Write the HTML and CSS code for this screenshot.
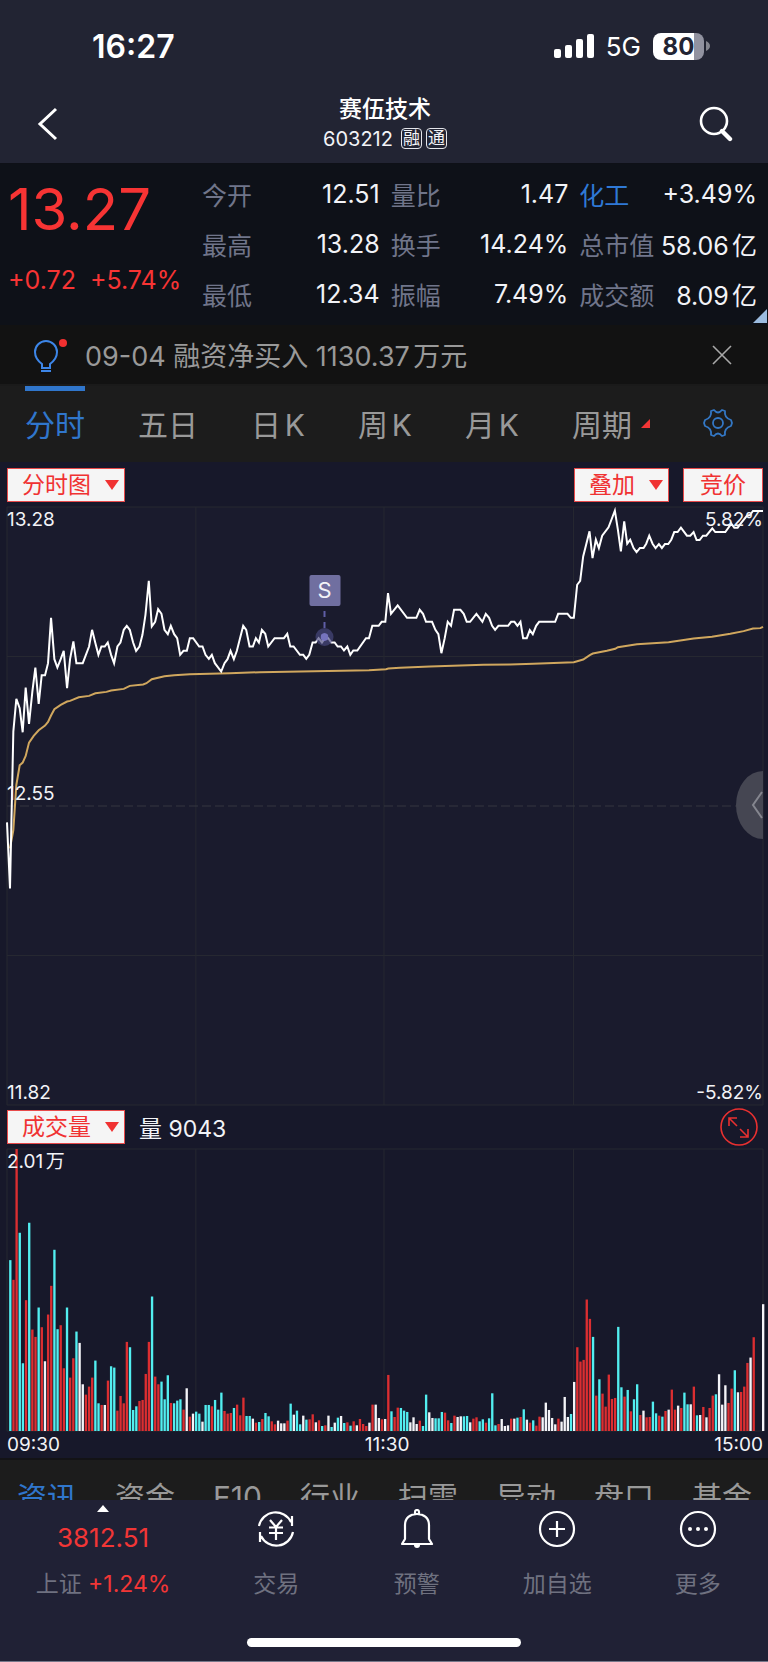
FILE: index.html
```html
<!DOCTYPE html>
<html lang="zh-CN">
<head>
  <meta charset="UTF-8" />
  <meta name="viewport" content="width=device-width, initial-scale=1.0"/>
  <title>赛伍技术 603212</title>
  <link rel="stylesheet" href="styles.css">
</head>
<body>
  <div class="statusbar">
    <span class="clock">16:27</span>
    <div class="signals">
      <svg width="40" height="26" viewBox="0 0 40 26" fill="#fff" aria-hidden="true">
        <rect x="0" y="16" width="7" height="9" rx="2"/>
        <rect x="11" y="12" width="7" height="13" rx="2"/>
        <rect x="22" y="6" width="7" height="19" rx="2"/>
        <rect x="33" y="1" width="7" height="24" rx="2"/>
      </svg>
      <span class="network">5G</span>
      <div class="battery-wrap">
        <span class="battery">80</span>
        <svg width="4" height="10" viewBox="0 0 4 10" aria-hidden="true"><path d="M0 0Q4 2 4 5T0 10Z" fill="#84858f"/></svg>
      </div>
    </div>
  </div>

  <header>
    <button class="icon-btn back" aria-label="返回">
      <svg width="24" height="34" viewBox="0 0 24 34" fill="none" stroke="#fff" stroke-width="3"><path d="M20 2L4 17L20 32"/></svg>
    </button>
    <div class="stock">
      <h1>赛伍技术</h1>
      <div class="code"><span>603212</span><span class="tag">融</span><span class="tag">通</span></div>
    </div>
    <button class="icon-btn search" aria-label="搜索">
      <svg width="36" height="36" viewBox="0 0 36 36" fill="none" stroke="#fff"><circle cx="16" cy="15" r="13" stroke-width="2.6"/><path d="M24 25L32 33" stroke-width="4.4" stroke-linecap="round"/></svg>
    </button>
  </header>

  <section class="quote">
    <div class="price">
      <strong>13.27</strong>
      <div class="change"><span>+0.72</span><span>+5.74%</span></div>
    </div>
    <dl class="stats">
      <div><dt>今开</dt><dd>12.51</dd></div>
      <div><dt>量比</dt><dd>1.47</dd></div>
      <div><dt class="link">化工</dt><dd>+3.49%</dd></div>
      <div><dt>最高</dt><dd>13.28</dd></div>
      <div><dt>换手</dt><dd>14.24%</dd></div>
      <div><dt>总市值</dt><dd>58.06亿</dd></div>
      <div><dt>最低</dt><dd>12.34</dd></div>
      <div><dt>振幅</dt><dd>7.49%</dd></div>
      <div><dt>成交额</dt><dd>8.09亿</dd></div>
    </dl>
    <i class="corner"></i>
  </section>

  <div class="news">
    <svg width="34" height="46" viewBox="0 0 34 46" fill="none" stroke="#3d86e8" stroke-width="2" aria-hidden="true">
      <path d="M8 36V32C4 29 1 25 1 20A11 11 0 0 1 23 20C23 25 20 29 16 32V36ZM7 39H17"/>
      <circle cx="29" cy="11" r="4" fill="#f23030" stroke="none"/>
    </svg>
    <p>09-04 融资净买入 1130.37万元</p>
    <button class="icon-btn" aria-label="关闭">
      <svg width="20" height="20" viewBox="0 0 20 20" fill="none" stroke="#a8a8a8" stroke-width="1.6"><path d="M1 1L19 19M19 1L1 19"/></svg>
    </button>
  </div>

  <nav class="periods">
    <button class="active">分时</button>
    <button>五日</button>
    <button>日K</button>
    <button>周K</button>
    <button>月K</button>
    <button class="more">周期</button>
    <button class="gear" aria-label="设置">
      <svg width="30" height="30" viewBox="0 0 30 30" fill="none" stroke="#3377c4" stroke-width="1.8" stroke-linejoin="round">
        <path d="M8 3L11 2Q15 7 19 2L22 3Q21 10 28 12L29 15L28 18Q21 20 22 27L19 28Q15 23 11 28L8 27Q9 20 2 18L1 15L2 12Q9 10 8 3Z"/>
        <circle cx="15" cy="15" r="5"/>
      </svg>
    </button>
  </nav>

  <main>
    <div class="toolbar">
      <button class="pick arrow">分时图</button>
      <span class="spacer"></span>
      <button class="pick arrow">叠加</button>
      <button class="pick">竞价</button>
    </div>

    <div class="plot price-plot">
      <svg viewBox="22 22 2266 1792" preserveAspectRatio="none">
        <path class="grid" d="M22 22H2288V1814H22ZM22 470H2288M22 1366H2288M588 22V1814M1152 22V1814M1720 22V1814"/>
        <path class="grid dashed" d="M22 918H2288"/>
        <polyline class="avg" points="31,1045 41,990 50,855 60,796 69,788 78,768 88,728 102,708 117,691 136,677 145,666 154,647 164,628 183,615 202,605 211,603 237,592 268,588 287,580 320,576 334,572 372,567 390,558 430,554 440,550 456,538 494,529 523,526 570,523 690,520 780,517 1107,511 1158,508 1165,506 1200,504 1290,500 1450,495 1530,494 1600,492 1721,487 1749,479 1770,465 1778,461 1820,453 1845,447 1853,442 1910,433 2005,427 2080,416 2135,411 2190,402 2230,394 2258,386 2280,385 2288,381"/>
        <polyline class="line" points="22,967 31,1165 41,695 50,597 60,625 69,697 78,563 88,672 98,575 107,503 117,612 126,526 136,526 145,490 154,354 164,478 173,503 183,478 192,453 202,565 211,478 221,425 230,490 249,490 268,440 277,390 287,430 296,465 305,440 315,440 324,428 334,465 343,490 353,440 362,428 372,390 381,378 390,390 400,428 409,453 419,440 428,405 437,345 447,243 456,380 466,366 475,328 485,342 494,390 504,403 513,378 523,403 532,415 541,465 551,453 561,453 570,415 580,415 598,440 608,440 617,465 627,477 636,465 645,490 664,515 674,490 683,478 692,453 702,478 711,453 730,378 739,390 749,440 759,440 768,415 777,428 786,390 796,402 805,440 824,415 852,415 862,402 871,440 881,440 900,465 910,465 919,477 928,465 938,428 947,428 956,415 966,428 975,415 985,415 994,428 1004,428 1013,440 1023,440 1032,452 1042,440 1051,465 1060,452 1072,452 1098,415 1107,415 1117,378 1136,378 1145,366 1156,366 1164,280 1173,342 1193,317 1221,354 1249,354 1259,330 1269,342 1278,366 1296,366 1306,390 1315,403 1324,460 1334,415 1343,366 1353,378 1362,330 1381,330 1391,342 1400,366 1410,366 1429,342 1447,366 1457,342 1467,354 1476,378 1485,390 1495,378 1524,378 1533,366 1543,366 1552,378 1561,366 1569,415 1580,415 1589,391 1598,403 1608,378 1617,366 1665,366 1674,342 1702,342 1712,354 1721,354 1731,255 1740,243 1749,170 1768,95 1777,175 1787,120 1796,145 1806,108 1825,83 1844,33 1853,90 1862,155 1872,65 1881,132 1890,120 1900,145 1909,157 1919,145 1930,145 1938,132 1947,108 1957,132 1966,145 1976,133 1985,145 1994,133 2004,133 2013,120 2022,97 2032,97 2042,84 2060,108 2070,108 2080,97 2089,121 2098,121 2108,108 2118,108 2136,86 2145,97 2175,97 2193,72 2202,84 2212,84 2221,72 2240,48 2249,46 2258,34 2288,34"/>
      </svg>
      <span class="label top-left">13.28</span>
      <span class="label top-right">5.82%</span>
      <span class="label mid-left">12.55</span>
      <span class="label bottom-left">11.82</span>
      <span class="label bottom-right">-5.82%</span>
      <div class="trade">
        <b>S</b>
        <i class="stem"></i>
        <i class="dot"></i>
      </div>
      <button class="handle" aria-label="展开盘口">
        <svg width="12" height="28" viewBox="0 0 12 28" fill="none" stroke="#85868f" stroke-width="2"><path d="M11 1L2 14L11 27"/></svg>
      </button>
    </div>

    <div class="toolbar">
      <button class="pick arrow">成交量</button>
      <span class="volume-now">量 9043</span>
      <span class="spacer"></span>
      <button class="icon-btn expand" aria-label="放大">
        <svg width="38" height="38" viewBox="0 0 38 38" fill="none" stroke="#e93030" stroke-width="1.6">
          <circle cx="19" cy="19" r="18"/>
          <path d="M17 18L9 10M9 18V10H17M20 21L28 29M28 21V29H20"/>
        </svg>
      </button>
    </div>

    <div class="plot volume-plot">
      <svg viewBox="0 0 2266 845" preserveAspectRatio="none">
        <path class="grid" d="M0 0H2266V845H0ZM566 0V845M1130 0V845M1698 0V845"/>
        <g id="bars"></g>
      </svg>
      <span class="label top-left">2.01万</span>
    </div>
    <div class="times"><span>09:30</span><span>11:30</span><span>15:00</span></div>
  </main>

  <nav class="sections">
    <a href="#" class="active">资讯</a>
    <a href="#">资金</a>
    <a href="#">F10</a>
    <a href="#">行业</a>
    <a href="#">扫雷</a>
    <a href="#">异动</a>
    <a href="#">盘口</a>
    <a href="#">基金</a>
  </nav>

  <footer>
    <div class="actions">
      <button class="index">
        <i class="up"></i>
        <span class="points">3812.51</span>
        <span class="caption">上证 <em>+1.24%</em></span>
      </button>
      <button>
        <svg width="38" height="40" viewBox="0 0 38 40" fill="none" stroke="#fff" stroke-width="2.2">
          <path d="M2 17A17 17 0 0 1 34 13M35 7V17M36 23A17 17 0 0 1 4 27M3 33V23M13 11L19 18L25 11M12 18.500H26M12 24H26M19 18V31"/>
        </svg>
        <span class="caption">交易</span>
      </button>
      <button>
        <svg width="38" height="40" viewBox="0 0 38 40" fill="none" stroke="#fff" stroke-width="2.2" stroke-linejoin="round">
          <path d="M7 30V16C7 9 12 5 19 5S31 9 31 16V30L34 35H4ZM17 5V3Q17 1 19 1T21 3V5"/>
          <path d="M16 36H22Q22 39 19 39T16 36Z" fill="#fff" stroke="none"/>
        </svg>
        <span class="caption">预警</span>
      </button>
      <button>
        <svg width="38" height="40" viewBox="0 0 38 40" fill="none" stroke="#fff" stroke-width="2.2"><circle cx="19" cy="20" r="17"/><path d="M11 20H27M19 12V28"/></svg>
        <span class="caption">加自选</span>
      </button>
      <button>
        <svg width="38" height="40" viewBox="0 0 38 40" fill="#fff"><circle cx="19" cy="20" r="17" fill="none" stroke="#fff" stroke-width="2.2"/><circle cx="11" cy="20" r="2"/><circle cx="19" cy="20" r="2"/><circle cx="27" cy="20" r="2"/></svg>
        <span class="caption">更多</span>
      </button>
    </div>
    <div class="home"></div>
  </footer>

  <script src="chart.js"></script>
</body>
</html>
```
FILE: styles.css
```css
* {
  box-sizing: border-box;
}

body {
  margin: 0;
  background: #202135;
  color: #f2f3f7;
  font-family: Inter, "Noto Sans CJK SC", sans-serif;
  text-autospace: normal;
}

button {
  background: none;
  border: none;
  padding: 0;
  margin: 0;
  color: inherit;
  font-family: inherit;
  cursor: pointer;
}

svg {
  display: block;
}

.icon-btn {
  display: flex;
  align-items: center;
  justify-content: center;
}

/* status bar + title */
.statusbar {
  background: #222433;
  height: 84px;
  padding: 8px 58px 0 92px;
  display: flex;
  align-items: center;
  justify-content: space-between;
  color: #fff;
}

.clock {
  font-size: 32px;
  font-weight: 600;
}

.signals {
  display: flex;
  align-items: center;
  gap: 12px;
}

.network {
  font-size: 26px;
}

.battery-wrap {
  display: flex;
  align-items: center;
  gap: 2px;
}

.battery {
  width: 51px;
  height: 27px;
  line-height: 27px;
  border-radius: 8px;
  background: linear-gradient(to right, #fff 80%, #9192a0 80%);
  color: #222433;
  text-align: center;
  font-size: 24px;
  font-weight: 700;
}

header {
  background: #222433;
  height: 80px;
  padding: 0 34px 0 36px;
  display: grid;
  grid-template-columns: 1fr auto 1fr;
  align-items: center;
  border-bottom: 1px solid #0e1017;
}

.back {
  justify-self: start;
}

.search {
  justify-self: end;
}

.stock {
  text-align: center;
}

.stock h1 {
  margin: 0;
  font-size: 23px;
  line-height: 30px;
  font-weight: 500;
  color: #fff;
}

.code {
  display: flex;
  align-items: center;
  gap: 4px;
  font-size: 20px;
  line-height: 30px;
}

.code span:first-child {
  margin-right: 4px;
}

.tag {
  border: 1px solid #e4e5ea;
  border-radius: 4px;
  width: 21px;
  height: 21px;
  line-height: 19px;
  font-size: 17px;
  display: flex;
  justify-content: center;
}

/* quote */
.quote {
  position: relative;
  background: #0e1118;
  height: 161px;
  padding: 5px 11px 0 8px;
  display: grid;
  grid-template-columns: 194px 1fr;
}

.price {
  color: #f73434;
  padding-top: 3px;
}

.price strong {
  display: block;
  font-size: 58px;
  line-height: 74px;
  font-weight: 400;
}

.change {
  display: flex;
  gap: 14px;
  font-size: 25px;
  line-height: 30px;
  padding-top: 19px;
}

.stats {
  margin: 0;
  display: grid;
  grid-template-columns: repeat(3, 1fr);
  grid-auto-rows: 50px;
  column-gap: 11px;
  font-size: 25px;
}

.stats div {
  display: flex;
  justify-content: space-between;
  align-items: center;
  white-space: nowrap;
}

.stats dt {
  color: #70758a;
}

.stats dt.link {
  color: #2f79d6;
}

.stats dd {
  margin: 0;
}

.corner {
  position: absolute;
  right: 1px;
  bottom: 2px;
  border-left: 14px solid transparent;
  border-bottom: 14px solid #9cbce0;
}

/* news strip */
.news {
  background: #121212;
  height: 61px;
  padding: 0 36px 0 34px;
  display: flex;
  align-items: center;
  gap: 17px;
  border-bottom: 2px solid #1a1a1a;
  color: #999;
}

.news p {
  flex: 1;
  margin: 0;
  font-size: 27px;
}

/* period tabs */
.periods {
  background: #1c1c1c;
  height: 76px;
  padding: 0 35px 0 25px;
  display: flex;
  justify-content: space-between;
  align-items: stretch;
}

.periods button {
  color: #999;
  font-size: 30px;
  padding-bottom: 7px;
  border-top: 5px solid transparent;
  display: flex;
  align-items: center;
}

.periods .active {
  color: #3076cc;
  border-image: linear-gradient(#3076cc, #3076cc) 1;
  border-bottom: 0;
}

.periods .more::after {
  content: "";
  margin-left: 9px;
  border-left: 9px solid transparent;
  border-bottom: 9px solid #f23636;
}

/* charts */
main {
  background: #17182a;
  padding: 6px 5px 0 7px;
}

.toolbar {
  display: flex;
  align-items: center;
  gap: 14px;
  height: 34px;
}

.spacer {
  flex: 1;
}

.pick {
  height: 34px;
  padding: 0 16px;
  display: flex;
  align-items: center;
  background: #f5f5f5;
  border: 1px solid #e84a4a;
  color: #f03232;
  font-size: 23px;
  line-height: 32px;
}

.pick.arrow {
  padding: 0 5px 0 14px;
  gap: 14px;
}

.pick.arrow::after {
  content: "";
  border: 7px solid transparent;
  border-top: 10px solid #f03232;
  border-bottom: 0;
}

.volume-now {
  font-size: 23px;
}

.expand {
  margin-right: 5px;
}

.plot {
  position: relative;
  margin-top: 5px;
}

.plot > svg {
  width: 100%;
  overflow: visible;
}

.price-plot {
  background: #1a1b2d;
  margin-bottom: 5px;
}

.price-plot > svg {
  height: 598px;
}

.volume-plot > svg {
  height: 282px;
}

.grid, .avg, .line {
  fill: none;
  vector-effect: non-scaling-stroke;
}

.grid {
  stroke: #262831;
  stroke-width: 1px;
}

.dashed {
  stroke: #343640;
  stroke-dasharray: 9 4;
}

.avg {
  stroke: #d0a75e;
  stroke-width: 2px;
}

.line {
  stroke: #fff;
  stroke-width: 2px;
}

.label {
  position: absolute;
  font-size: 19px;
  line-height: 24px;
}

.top-left {
  top: 1px;
  left: 0;
}

.top-right {
  top: 1px;
  right: 0;
}

.mid-left {
  bottom: 50%;
  left: 0;
}

.bottom-left {
  bottom: 0;
  left: 0;
}

.bottom-right {
  bottom: 0;
  right: 0;
}

/* sell marker on the price line */
.trade {
  position: absolute;
  left: 42%;
  top: 68px;
  transform: translateX(-50%);
  display: flex;
  flex-direction: column;
  align-items: center;
}

.trade b {
  width: 31px;
  height: 31px;
  line-height: 31px;
  border-radius: 2px;
  background: #706fa0;
  text-align: center;
  font-size: 22px;
  font-weight: 400;
}

.stem {
  height: 17px;
  margin-top: 5px;
  border-left: 2px dashed #5f5ea6;
}

.dot {
  width: 18px;
  height: 18px;
  border-radius: 50%;
  border: 5px solid #4a4980aa;
  background: #7573bd;
  background-clip: padding-box;
}

.handle {
  position: absolute;
  right: 0;
  top: 264px;
  width: 27px;
  height: 68px;
  border-radius: 27px 0 0 27px / 34px 0 0 34px;
  background: #454652;
  display: flex;
  align-items: center;
  justify-content: flex-end;
}

.bar-up {
  fill: #dc2e31;
}

.bar-down {
  fill: #52eef0;
}

.bar-flat {
  fill: #f4f4f8;
}

.times {
  display: flex;
  justify-content: space-between;
  font-size: 19px;
  line-height: 27px;
}

/* section tabs, cut off by the bottom bar */
.sections {
  background: #1c1c1c;
  border-top: 2px solid #131316;
  height: 42px;
  padding: 14px 16px 0 17px;
  overflow: hidden;
  display: flex;
  justify-content: space-between;
  align-items: flex-start;
}

.sections a {
  color: #999;
  text-decoration: none;
  font-size: 30px;
  line-height: 46px;
}

.sections .active {
  color: #3076cc;
}

/* bottom bar */
footer {
  background: #202135;
  height: 162px;
  border-bottom: 1px solid #76778a;
}

.actions {
  display: grid;
  grid-template-columns: 22fr 15fr 15fr 15fr 15fr;
  height: 138px;
}

.actions button {
  display: flex;
  flex-direction: column;
  align-items: center;
  padding-top: 9px;
}

.caption {
  margin-top: 18px;
  font-size: 23px;
  line-height: 34px;
  color: #6f7180;
}

.caption em {
  color: #f23636;
  font-style: normal;
}

.actions .index {
  padding-top: 5px;
}

.up {
  border: 6px solid transparent;
  border-bottom: 7px solid #fff;
  border-top: 0;
}

.points {
  margin-top: 10px;
  color: #f23636;
  font-size: 26px;
  line-height: 32px;
}

.index .caption {
  margin-top: 13px;
}

.home {
  width: 274px;
  height: 9px;
  margin: 0 auto;
  border-radius: 5px;
  background: #fff;
}
```
FILE: chart.js
```js
// one entry per minute: r = up, c = down, w = flat, followed by the volume
const volumes = `
c512 r453 r845 c594 c203 r392 c624 r304 r282 c370 r311 w209 r349 r435 c543 c305 r317 r188 c370 r160
r218 c298 w264 w140 r109 r133 r160 c211 c83 r78 w78 r151 c194 c190 r61 r105 r83 r267 c251 c63
c74 r90 r93 r171 r267 c403 r163 r140 c148 c95 c167 r84 c83 c91 c95 r64 w128 r43 w52 c58
c52 w28 c78 c78 r74 c93 c64 c115 r60 r52 r54 c69 r79 r47 r100 c45 c45 w37 r25 c27
r36 c54 c44 r29 r20 w31 w23 w23 r31 c82 w49 c61 c20 w46 c34 r35 r50 w26 r32 c15
r17 w46 c12 w25 c40 w45 c24 r26 c16 r29 w17 r36 r21 r15 w25 r79 w79 w39 r35 w36
r168 c59 r42 r70 c69 c61 c57 w26 w41 w21 r31 c15 c109 w56 w39 c38 c38 c57 r55 r32
c24 r46 w42 w44 c44 c45 w26 r37 r41 c29 c35 r25 c38 c113 c17 r21 w36 w15 w17 r37
w37 c40 r42 c65 w34 r25 c32 r16 r43 w41 w85 w63 w39 w20 r37 w28 w102 w42 c51 w147
r251 r208 r213 r394 r336 c282 r106 c155 r112 r73 r169 r96 r99 c312 c131 r103 c123 r59 c95 c140
r48 w61 r41 r42 c88 c53 r46 c43 r60 w64 r124 r64 w76 r69 c115 c80 w80 r133 c47 w48
r72 w41 r69 r106 c110 w170 w79 w137 r84 r127 c182 w116 r117 r133 r204 w220 r281 w0 w0 w380
`.trim().split(/\s+/);

const names = { r: "bar-up", c: "bar-down", w: "bar-flat" };
const bars = document.getElementById("bars");

volumes.forEach((item, i) => {
  const height = Number(item.slice(1));
  const rect = document.createElementNS("http://www.w3.org/2000/svg", "rect");
  rect.setAttribute("class", names[item[0]]);
  rect.setAttribute("x", (i + 1) * 2266 / 240 - 3);
  rect.setAttribute("y", 845 - height);
  rect.setAttribute("width", 7);
  rect.setAttribute("height", height);
  bars.appendChild(rect);
});
```
